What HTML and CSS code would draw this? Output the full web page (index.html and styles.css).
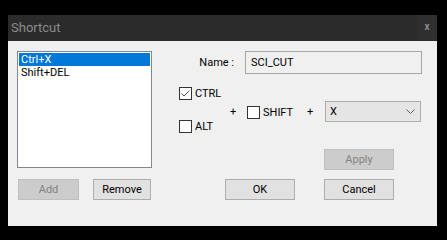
FILE: index.html
```html
<!DOCTYPE html>
<html lang="en">
<head>
    <meta charset="UTF-8">
    <title>Shortcut</title>
    <link rel="stylesheet" href="styles.css">
</head>
<body>
    <div class="dialog">
        <div class="titlebar">
            <span class="title">Shortcut</span>
            <span class="close">x</span>
        </div>
        <div class="content">
            <div class="list">
                <div class="item selected">Ctrl+X</div>
                <div class="item">Shift+DEL</div>
            </div>

            <div class="panel">
                <div class="name-row">
                    <label class="name-label">Name :</label>
                    <div class="name-input">SCI_CUT</div>
                </div>

                <div class="mods">
                    <div class="mod-col">
                        <div class="check-row">
                            <span class="box">
                                <svg width="11" height="11" viewBox="0 0 11 11"><polyline points="1.5,5.5 4,8 9.5,2.5" fill="none" stroke="#555" stroke-width="1"/></svg>
                            </span>
                            <span class="check-text">CTRL</span>
                        </div>
                        <div class="check-row">
                            <span class="box"></span>
                            <span class="check-text">ALT</span>
                        </div>
                    </div>
                    <div class="mod-mid">
                        <span class="plus">+</span>
                        <div class="check-row shift">
                            <span class="box"></span>
                            <span class="check-text">SHIFT</span>
                        </div>
                        <span class="plus">+</span>
                        <div class="combo">
                            <span>X</span>
                            <svg width="9" height="5" viewBox="0 0 9 5"><polyline points="0.5,0.5 4.5,4.5 8.5,0.5" fill="none" stroke="#606060" stroke-width="1"/></svg>
                        </div>
                    </div>
                </div>

                <div class="apply-row">
                    <button class="btn btn-wide" disabled>Apply</button>
                </div>
            </div>

            <div class="left-buttons">
                <button class="btn btn-add" disabled>Add</button>
                <button class="btn btn-remove">Remove</button>
            </div>

            <div class="right-buttons">
                <button class="btn btn-wide">OK</button>
                <button class="btn btn-wide">Cancel</button>
            </div>
        </div>
    </div>
</body>
</html>
```

FILE: styles.css
```css
* { margin: 0; padding: 0; box-sizing: border-box; }
body {
    background: #000;
    font-family: Roboto, 'Liberation Sans', sans-serif;
    font-size: 11px;
    color: #000;
    padding: 15px 0 0 8px;
}
.dialog {
    width: 429px;
    height: 211px;
    background: #f0f0f0;
}
.titlebar {
    height: 26px;
    background: #2b2b2b;
    display: flex;
    justify-content: space-between;
    align-items: stretch;
}
.title {
    color: #8c8c8c;
    font-size: 13px;
    line-height: 26px;
    padding-left: 3px;
}
.close {
    width: 20px;
    height: 25px;
    background: #2f2f2f;
    color: #8a8a8a;
    font-weight: bold;
    font-size: 10px;
    line-height: 24px;
    text-align: center;
}
.content {
    display: grid;
    grid-template-columns: 135px 243px;
    grid-template-rows: 119px 21px;
    column-gap: 27px;
    row-gap: 9px;
    padding: 10px 0 0 9px;
}
.list {
    height: 117px;
    background: #fff;
    border: 1px solid #828790;
    padding: 1px;
}
.item {
    height: 13px;
    line-height: 13px;
    padding-left: 2px;
    white-space: nowrap;
}
.item.selected {
    background: #0078d7;
    color: #fff;
}
.name-row {
    display: flex;
    align-items: center;
    height: 23px;
}
.name-label {
    width: 55px;
    text-align: right;
}
.name-input {
    margin-left: 11px;
    width: 177px;
    height: 23px;
    border: 1px solid #a5a5a5;
    background: #f0f0f0;
    padding-left: 5px;
    line-height: 21px;
}
.mods {
    display: flex;
    margin-top: 13px;
}
.mod-col {
    width: 46px;
    flex: none;
    display: flex;
    flex-direction: column;
    gap: 20px;
}
.check-row {
    display: flex;
    align-items: center;
    height: 13px;
}
.box {
    flex: none;
    width: 13px;
    height: 13px;
    border: 1px solid #333;
    background: #fff;
    display: flex;
    align-items: center;
    justify-content: center;
}
.check-text {
    margin-left: 3px;
}
.mod-mid {
    display: flex;
    align-items: center;
    height: 21px;
    margin-top: 14px;
}
.plus {
    flex: none;
    width: 16px;
    text-align: center;
}
.shift {
    flex: none;
    width: 55px;
    margin-left: 6px;
    margin-top: 1px;
    overflow: hidden;
}
.combo {
    flex: none;
    margin-left: 7px;
    width: 96px;
    height: 21px;
    background: #e5e5e5;
    border: 1px solid #adadad;
    display: flex;
    align-items: center;
    justify-content: space-between;
    padding: 0 5px 0 4px;
}
.apply-row {
    display: flex;
    justify-content: flex-end;
    padding-right: 28px;
    margin-top: 16px;
}
.btn {
    height: 21px;
    background: #e1e1e1;
    border: 1px solid #adadad;
    font-family: inherit;
    font-size: 11px;
    color: #000;
}
.btn:disabled {
    background: #cccccc;
    border-color: #bfbfbf;
    color: #838383;
}
.btn-wide { width: 70px; }
.btn-add { width: 61px; }
.btn-remove { width: 58px; }
.left-buttons {
    display: flex;
    gap: 14px;
    padding-left: 1px;
}
.right-buttons {
    display: flex;
    gap: 29px;
    padding-left: 46px;
}
```
